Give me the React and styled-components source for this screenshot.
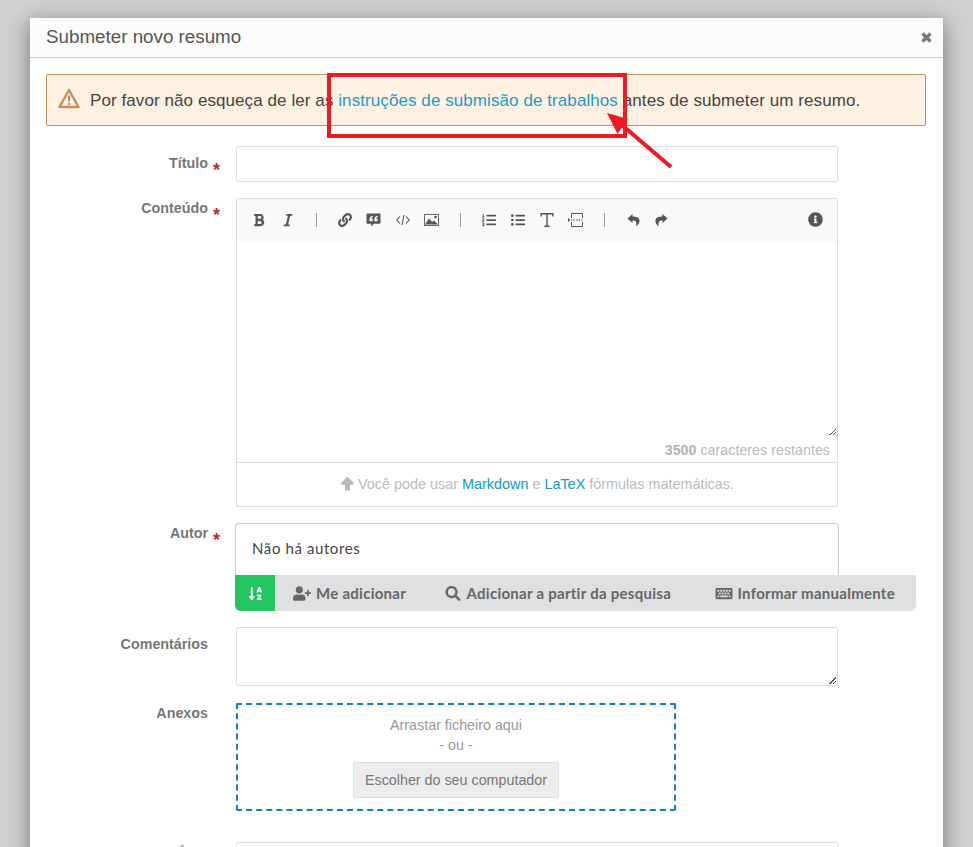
import React from 'react'
import styled, { createGlobalStyle } from 'styled-components'
import {
  FaBold, FaItalic, FaLink, FaListOl, FaListUl, FaInfoCircle,
  FaUserPlus, FaSearch, FaKeyboard, FaSortAlphaDown,
} from 'react-icons/fa'

const GlobalStyle = createGlobalStyle`
html, body {
    margin: 0;
    height: 100%;
    overflow: hidden;
    background: #d0d0d0;
    font-family: "Liberation Sans", Arial, sans-serif;
}
* { box-sizing: border-box; }
`

function CloseIcon() {
    return (
        <svg width="11" height="11" viewBox="0 0 11 11">
            <path d="M1.5 1.5 L9.5 9.5 M9.5 1.5 L1.5 9.5" fill="none" stroke="#777" strokeWidth="3.2" />
        </svg>
    )
}

function WarningIcon() {
    return (
        <svg width="22" height="21" viewBox="0 0 22 21">
            <path d="M11 2 L20.5 19 H1.5 Z" fill="none" stroke="#c1905c" strokeWidth="2.4" strokeLinejoin="round" />
            <rect x="10" y="7.5" width="2.2" height="6" fill="#c1905c" />
            <rect x="10" y="14.8" width="2.2" height="2.2" fill="#c1905c" />
        </svg>
    )
}

function QuoteBubble() {
    return (
        <svg width="15" height="15" viewBox="0 0 15 15">
            <path d="M1 0.5 H14 a1 1 0 0 1 1 1 V10.5 a1 1 0 0 1 -1 1 H8 L5 14.5 V11.5 H1 a1 1 0 0 1 -1 -1 V1.5 a1 1 0 0 1 1 -1 Z" fill="#555" />
            <path d="M6.8 3 C4.8 3.2 3.2 4.4 3.2 6.6 V8.8 H6.6 V5.8 H5 C5 5 5.8 4.6 6.8 4.5 Z M12 3 C10 3.2 8.4 4.4 8.4 6.6 V8.8 H11.8 V5.8 H10.2 C10.2 5 11 4.6 12 4.5 Z" fill="#f9f9f9" />
        </svg>
    )
}

function CodeIcon() {
    return (
        <svg width="14" height="11" viewBox="0 0 14 11" fill="none" stroke="#555" strokeWidth="1.1">
            <path d="M4 2 L0.8 5.5 L4 9" />
            <path d="M10 2 L13.2 5.5 L10 9" />
            <path d="M8 0.5 L6 10.5" />
        </svg>
    )
}

function PictureIcon() {
    return (
        <svg width="15" height="12" viewBox="0 0 15 12">
            <rect x="0.5" y="0.5" width="14" height="11" fill="#f9f9f9" stroke="#666" />
            <path d="M1 10.5 L5 4.5 L8 8 L10 6.5 L14 10.5 Z" fill="#555" />
            <circle cx="11.5" cy="3" r="1.3" fill="#555" />
        </svg>
    )
}

function SerifT() {
    return (
        <svg width="14" height="15" viewBox="0 0 14 15">
            <path d="M0.7 3.8 V0.8 H13.3 V3.8 M7 0.8 V14 M4.2 14.2 H9.8" fill="none" stroke="#555" strokeWidth="1.5" />
        </svg>
    )
}

function PageBreakIcon() {
    return (
        <svg width="15" height="14" viewBox="0 0 15 14" fill="none" stroke="#555">
            <path d="M3.5 5 V0.5 H14.5 V5" />
            <path d="M3.5 9 V13.5 H14.5 V9" />
            <path d="M3 7 H15" strokeDasharray="1.5 1" />
            <path d="M0 5 L2.5 7 L0 9 Z" fill="#555" stroke="none" />
        </svg>
    )
}

function UndoIcon({ flip }) {
    return (
        <svg width="13" height="14" viewBox="0 0 13 14" style={flip ? { transform: 'scaleX(-1)' } : undefined}>
            <path d="M5.5 1 L0.5 5.5 L5.5 10 V7.5 C8.5 7.2 10 8.5 9.3 13.5 C11.5 11.5 13 9.5 12.5 7 C12 4.5 9 3.5 5.5 3.5 Z" fill="#555" />
        </svg>
    )
}

function UploadArrow() {
    return (
        <svg width="15" height="15" viewBox="0 0 15 15">
            <path d="M7.5 0.5 L14.5 7.5 L12.5 8.8 H10 V14.5 H5 V8.8 H2.5 L0.5 7.5 Z" fill="#bbb" />
        </svg>
    )
}

function App() {
    return (
        <>
            <GlobalStyle />
            <Modal>
                <ModalHeader>
                    <h4>Submeter novo resumo</h4>
                    <CloseIcon />
                </ModalHeader>
                <ModalBody>
                    <Alert>
                        <WarningIcon />
                        <p>Por favor não esqueça de ler as <a>instruções de submisão de trabalhos</a> antes de submeter um resumo.</p>
                    </Alert>

                    <Row $gap={20}>
                        <Label $required $offset={8}>Título</Label>
                        <TextInput />
                    </Row>

                    <Row $gap={16}>
                        <Label $required $offset={1}>Conteúdo</Label>
                        <Editor>
                            <Toolbar>
                                <ToolCell><FaBold /></ToolCell>
                                <ToolCell><FaItalic /></ToolCell>
                                <ToolCell><Separator /></ToolCell>
                                <ToolCell><FaLink /></ToolCell>
                                <ToolCell><QuoteBubble /></ToolCell>
                                <ToolCell><CodeIcon /></ToolCell>
                                <ToolCell><PictureIcon /></ToolCell>
                                <ToolCell><Separator /></ToolCell>
                                <ToolCell><FaListOl /></ToolCell>
                                <ToolCell><FaListUl /></ToolCell>
                                <ToolCell><SerifT /></ToolCell>
                                <ToolCell><PageBreakIcon /></ToolCell>
                                <ToolCell><Separator /></ToolCell>
                                <ToolCell><UndoIcon /></ToolCell>
                                <ToolCell><UndoIcon flip /></ToolCell>
                                <InfoButton><FaInfoCircle /></InfoButton>
                            </Toolbar>
                            <EditorArea />
                            <Remaining><b>3500</b> caracteres restantes</Remaining>
                            <EditorHint>
                                <UploadArrow /> Você pode usar <a>Markdown</a> e <a>LaTeX</a> fórmulas matemáticas.
                            </EditorHint>
                        </Editor>
                    </Row>

                    <Row $gap={16}>
                        <Label $required $offset={1}>Autor</Label>
                        <Authors>
                            <AuthorsEmpty>Não há autores</AuthorsEmpty>
                            <AuthorsBar>
                                <SortButton><FaSortAlphaDown /></SortButton>
                                <AuthorAction $width={150} $pad={18}><FaUserPlus />Me adicionar</AuthorAction>
                                <AuthorAction $width={269} $pad={18.5}><FaSearch />Adicionar a partir da pesquisa</AuthorAction>
                                <AuthorAction $width={222} $pad={20.5}><FaKeyboard />Informar manualmente</AuthorAction>
                            </AuthorsBar>
                        </Authors>
                    </Row>

                    <Row $gap={16}>
                        <Label $offset={8}>Comentários</Label>
                        <Comments />
                    </Row>

                    <Row $gap={17}>
                        <Label $offset={1}>Anexos</Label>
                        <DropZone>
                            <p>Arrastar ficheiro aqui</p>
                            <p>- ou -</p>
                            <ChooseButton>Escolher do seu computador</ChooseButton>
                        </DropZone>
                    </Row>

                    <Row $gap={31}>
                        <Label $offset={2}>Área</Label>
                        <TextInput />
                    </Row>
                </ModalBody>
            </Modal>

            <HighlightBox />
            <HighlightArrow width="75" height="65" viewBox="0 0 75 65">
                <path d="M7 8 L28 14 L17.5 29 Z" fill="#ed1c24" />
                <path d="M22 20 L71 62" fill="none" stroke="#ed1c24" strokeWidth="4" />
            </HighlightArrow>
        </>
    )
}

export default App

const Modal = styled.div`
width: 913px;
margin: 18px 0 0 30px;
background: #fff;
box-shadow: 0 5px 20px rgba(0, 0, 0, 0.45);
`

const ModalHeader = styled.div`
height: 40px;
padding: 0 11px 0 16px;
display: flex;
align-items: center;
justify-content: space-between;
background: #fcfcfc;
border-bottom: 1px solid #ccc;

h4{
    margin: -1px 0 0;
    font-size: 18.8px;
    font-weight: 400;
    color: #555;
}
`

const ModalBody = styled.div`
padding: 16px 17px 40px 16px;
`

const Alert = styled.div`
height: 52px;
display: flex;
align-items: center;
gap: 10px;
padding: 0 11px;
background: #fff1e2;
border: 1px solid #c1905c;
border-radius: 2px;

svg{
    margin-top: -3px;
    flex-shrink: 0;
}

p{
    margin: 1px 0 0;
    font-size: 17px;
    letter-spacing: 0.08px;
    white-space: nowrap;
    color: #444;
}

a{
    color: #1b9cc7;
}
`

const Row = styled.div`
display: flex;
margin-top: ${props => props.$gap}px;
`

const Label = styled.div`
position: relative;
width: 162px;
flex-shrink: 0;
margin-right: 28px;
padding-top: ${props => props.$offset}px;
text-align: right;
font-size: 14.3px;
line-height: 18px;
font-weight: 700;
color: #777;

&::after{
    content: ${props => (props.$required ? '"*"' : 'none')};
    position: absolute;
    right: -12px;
    top: ${props => props.$offset + 7}px;
    font-size: 18px;
    color: #bd282e;
}
`

const TextInput = styled.div`
width: 602px;
height: 36px;
background: #fff;
border: 1px solid #ddd;
border-radius: 2px;
`

const Editor = styled.div`
width: 602px;
border: 1px solid #ddd;
border-radius: 2px;
`

const Toolbar = styled.div`
height: 43px;
padding: 0 0 2px 7.4px;
display: flex;
align-items: center;
background: #f9f9f9;
color: #555;

svg{
    height: 14px;
    flex-shrink: 0;
}
`

const ToolCell = styled.div`
width: 28.8px;
display: flex;
align-items: center;
justify-content: center;
`

const Separator = styled.span`
width: 1px;
height: 14px;
background: #999;
`

const InfoButton = styled.div`
margin-left: auto;
margin-right: 14px;
display: flex;

svg{
    width: 15px;
    height: 15px;
}
`

const EditorArea = styled.div`
height: 194px;
position: relative;
background: #fff;

&::after{
    content: "";
    position: absolute;
    right: 1px;
    bottom: 1px;
    width: 7px;
    height: 7px;
    background: linear-gradient(135deg, transparent 50%, #555 50%, #555 58%, transparent 58%, transparent 75%, #555 75%, #555 83%, transparent 83%);
}
`

const Remaining = styled.div`
height: 27px;
padding: 5px 7px 0 0;
text-align: right;
font-size: 14.3px;
line-height: 18px;
color: #bbb;
border-bottom: 1px solid #ddd;

b{
    color: #b3b3b3;
}
`

const EditorHint = styled.div`
height: 43px;
line-height: 43px;
text-align: center;
font-size: 14.4px;
color: #bbb;

svg{
    vertical-align: -2px;
    margin-right: -1px;
}

a{
    color: #0d9ac9;
}
`

const Authors = styled.div`
margin-left: -1px;
width: 681px;
`

const AuthorsEmpty = styled.div`
width: 604px;
height: 52px;
padding: 15px 16px 0;
font-family: Lato, sans-serif;
font-size: 15px;
line-height: 18px;
letter-spacing: 0.6px;
color: #444;
border: 1px solid #ccc;
border-bottom: 0;
border-radius: 4px 4px 0 0;
`

const AuthorsBar = styled.div`
height: 36px;
display: flex;
align-items: stretch;
background: #dfe0e2;
border-radius: 0 0 6px 6px;
overflow: hidden;
`

const SortButton = styled.div`
width: 40px;
display: flex;
align-items: center;
justify-content: center;
background: #22c55e;
color: #fff;
flex-shrink: 0;

svg{
    width: 15px;
    height: 15px;
}
`

const AuthorAction = styled.div`
width: ${props => props.$width}px;
padding-left: ${props => props.$pad}px;
display: flex;
align-items: center;
gap: 5px;
flex-shrink: 0;
font-family: Lato, sans-serif;
font-size: 15px;
font-weight: 700;
letter-spacing: 0.27px;
color: #666;
white-space: nowrap;

svg{
    width: 18px;
    height: 15px;
    color: #666;
    flex-shrink: 0;
}
`

const Comments = styled.div`
position: relative;
width: 602px;
height: 59px;
border: 1px solid #ddd;
border-radius: 2px;

&::after{
    content: "";
    position: absolute;
    right: 1px;
    bottom: 1px;
    width: 7px;
    height: 7px;
    background: linear-gradient(135deg, transparent 50%, #555 50%, #555 58%, transparent 58%, transparent 75%, #555 75%, #555 83%, transparent 83%);
}
`

const DropZone = styled.div`
width: 440px;
height: 108px;
padding-top: 10px;
border: 2px dashed #0b84a8;
border-radius: 2px;
text-align: center;
font-size: 14.3px;
color: #999;

p{
    margin: 0;
    line-height: 20px;
}
`

const ChooseButton = styled.div`
display: inline-block;
width: 206px;
height: 36px;
margin-top: 7px;
line-height: 34px;
background: #ececec;
border: 1px solid #ddd;
border-radius: 2px;
color: #777;
`

// the red marks someone drew over the screenshot
const HighlightBox = styled.div`
position: absolute;
left: 327px;
top: 73px;
width: 300px;
height: 65px;
border: 4px solid #ed1c24;
`

const HighlightArrow = styled.svg`
position: absolute;
left: 600px;
top: 105px;
`
